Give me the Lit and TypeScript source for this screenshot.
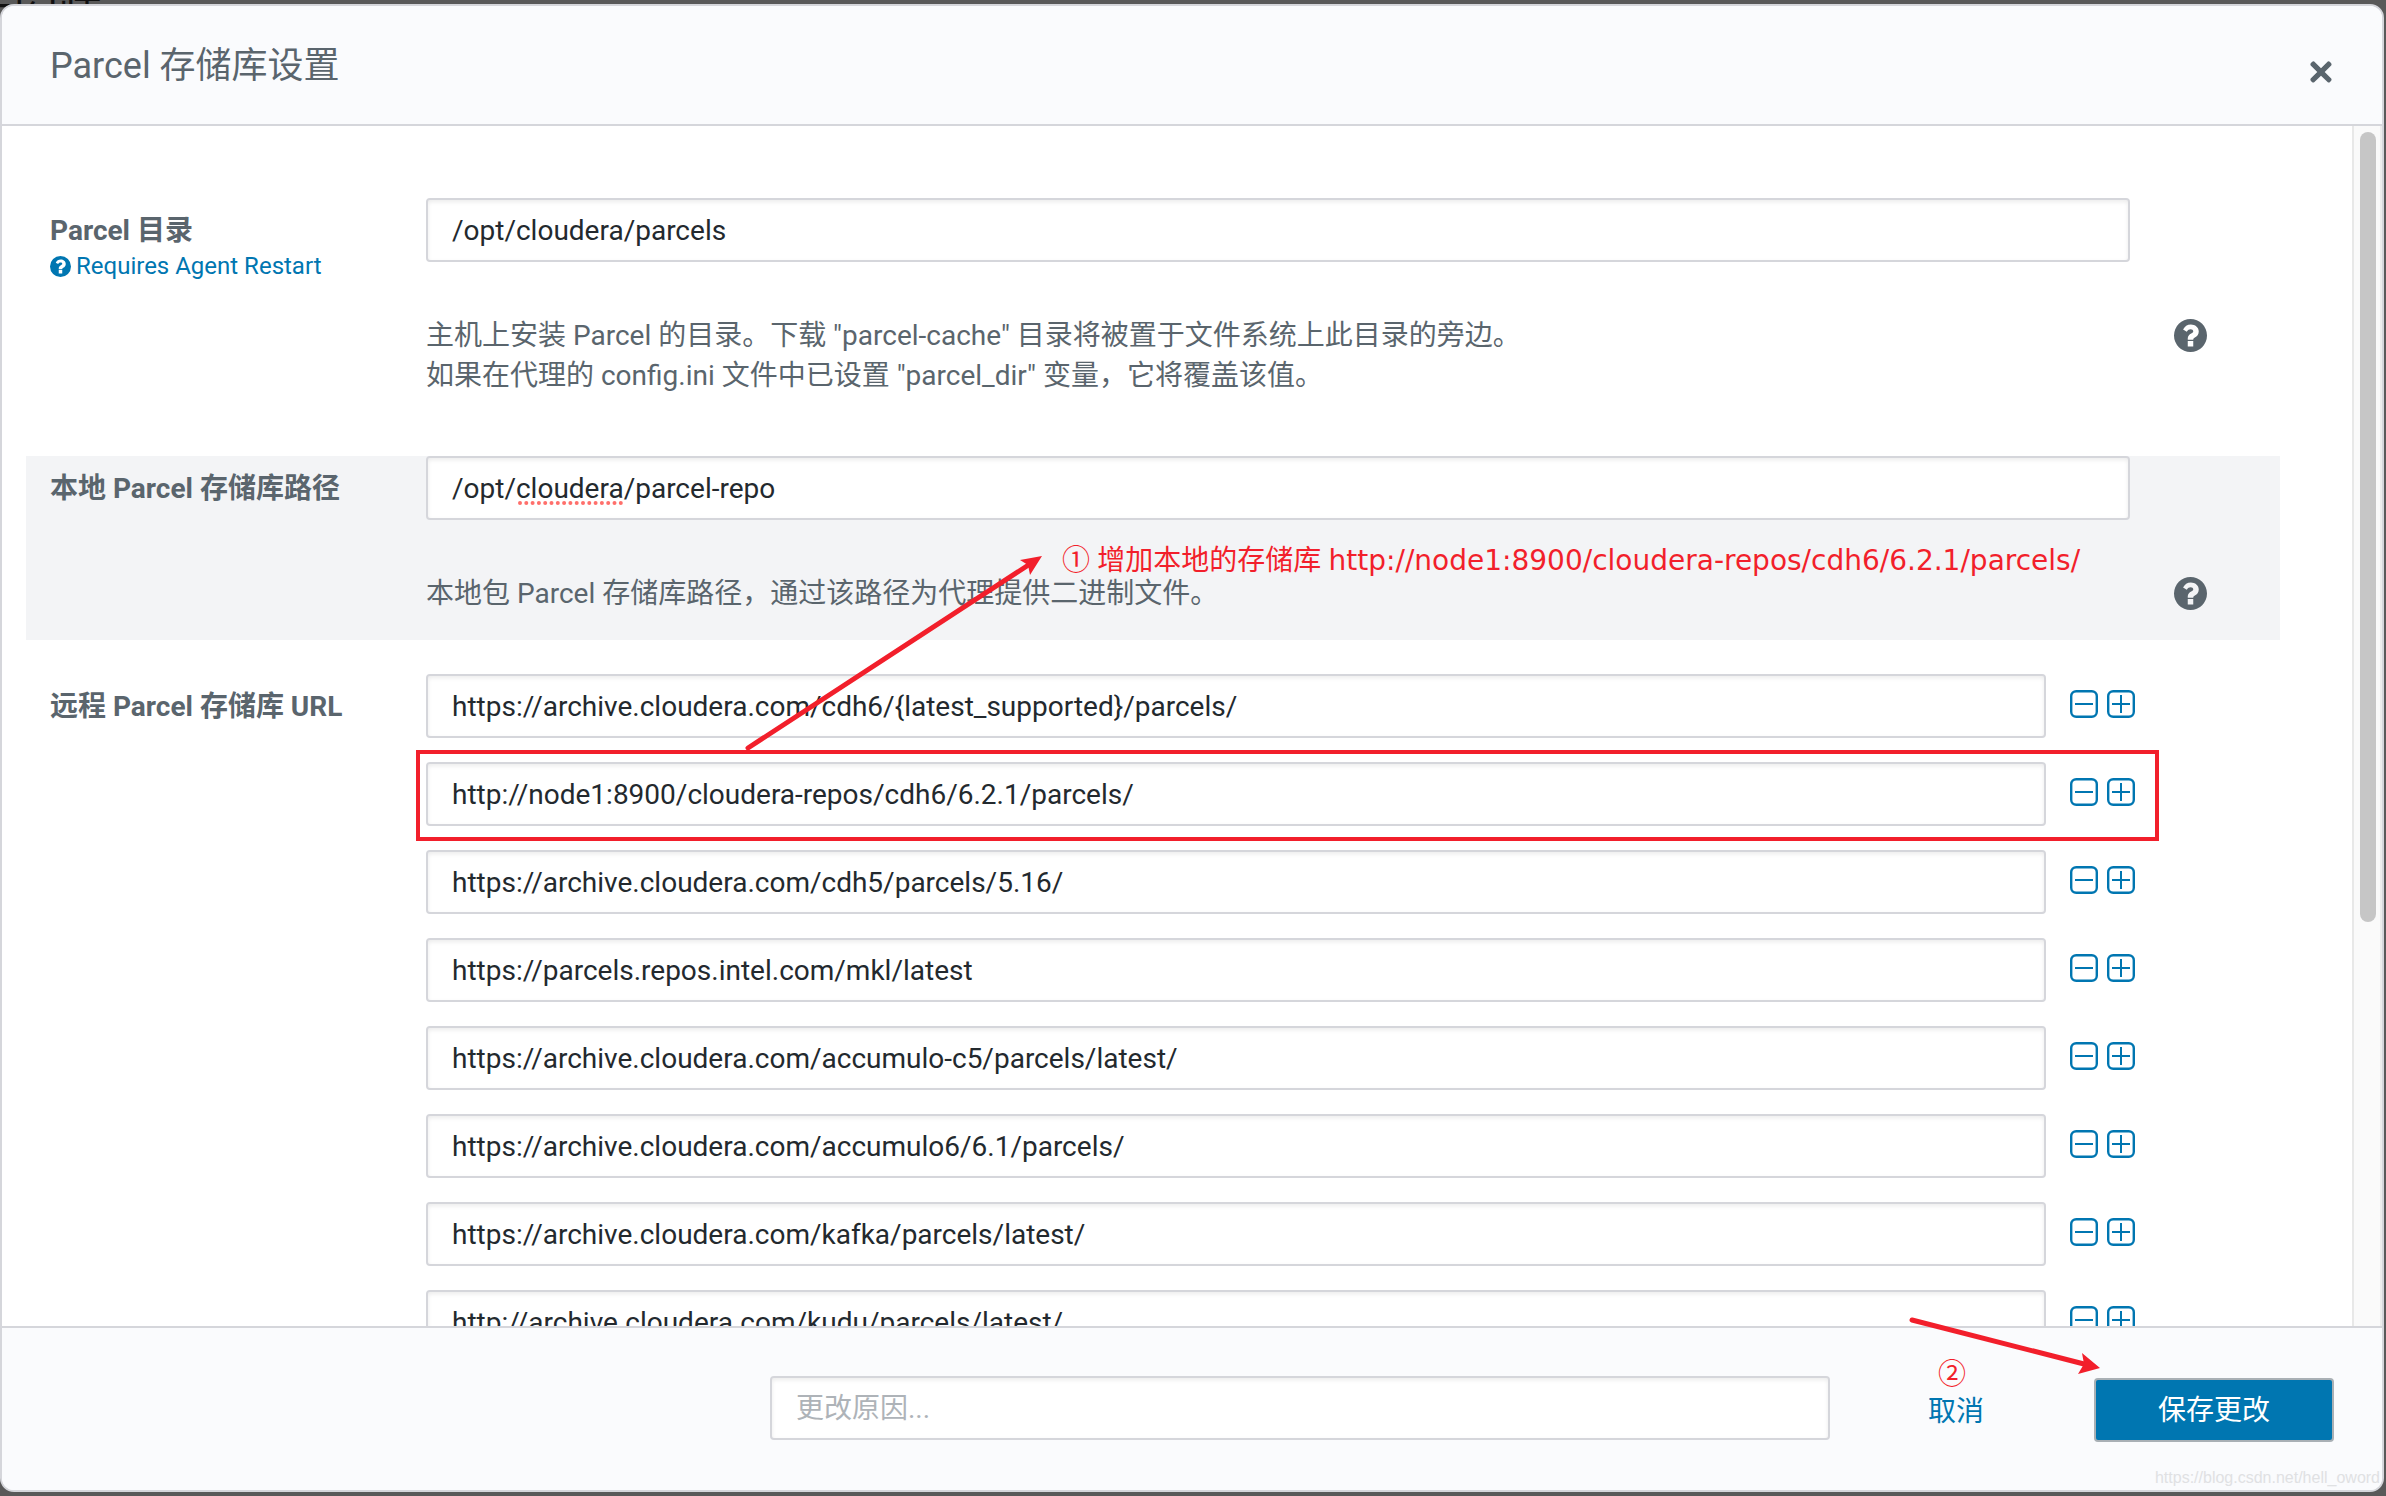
import { LitElement, html, css } from "lit";
import { customElement, property } from "lit/decorators.js";

const questionPath =
  "M12 0a12 12 0 1 0 0 24a12 12 0 0 0 0-24z M10 16h4v4h-4z M6.6 7.6C7.8 5.4 9.6 4 12.3 4C15.3 4 18 6 18 9c0 2.200-1.200 3.500-2.800 4.400c-.9.5-1.200.9-1.200 1.600h-4v-.8c0-1.900 1.200-3 2.500-3.700c1-.5 1.500-.9 1.500-1.600c0-.8-.8-1.400-1.900-1.400c-1.200 0-1.900.5-2.800 1.700z";

const repos = [
  "https://archive.cloudera.com/cdh6/{latest_supported}/parcels/",
  "http://node1:8900/cloudera-repos/cdh6/6.2.1/parcels/",
  "https://archive.cloudera.com/cdh5/parcels/5.16/",
  "https://parcels.repos.intel.com/mkl/latest",
  "https://archive.cloudera.com/accumulo-c5/parcels/latest/",
  "https://archive.cloudera.com/accumulo6/6.1/parcels/",
  "https://archive.cloudera.com/kafka/parcels/latest/",
  "http://archive.cloudera.com/kudu/parcels/latest/",
];

@customElement("help-icon")
export class HelpIcon extends LitElement {
  static styles = css`
    :host { display: block; }
    .icon { display: block; width: 100%; fill: currentColor; fill-rule: evenodd; }
  `;
  render() {
    return html`<svg class="icon" viewBox="0 0 24 24" aria-hidden="true"><path d=${questionPath}></path></svg>`;
  }
}

@customElement("repo-row")
export class RepoRow extends LitElement {
  @property() value = "";
  @property() name = "";
  static styles = css`
    :host { display: flex; align-items: flex-start; }
    .field {
      box-sizing: border-box; flex: 1; min-width: 0; height: 64px; padding: 0 24px;
      border: 2px solid #d5d6db; border-radius: 4px; background: #fff;
      box-shadow: inset 0 2px 4px rgba(0, 0, 0, 0.08);
      font: 28px Roboto, "Noto Sans CJK SC", sans-serif; color: #23292e; outline: none;
    }
    .tools { display: flex; flex: none; gap: 9px; padding: 16px 0 0 24px; width: 84px; box-sizing: border-box; }
    .tool { display: block; padding: 0; border: 0; background: none; cursor: pointer; }
    .glyph { display: block; width: 28px; height: 28px; fill: none; stroke: #0076b1; }
  `;
  render() {
    return html`
      <input class="field" type="text" aria-label=${this.name} .value=${this.value} spellcheck="false" />
      <div class="tools">
        <button class="tool" type="button" aria-label="-">
          <svg class="glyph" viewBox="0 0 28 28"><rect x="1.200" y="1.200" width="25.600" height="25.600" rx="5" stroke-width="2.400"></rect><path d="M5 14h18" stroke-width="2"></path></svg>
        </button>
        <button class="tool" type="button" aria-label="+">
          <svg class="glyph" viewBox="0 0 28 28"><rect x="1.200" y="1.200" width="25.600" height="25.600" rx="5" stroke-width="2.400"></rect><path d="M5 14h18M14 5v18" stroke-width="2"></path></svg>
        </button>
      </div>
    `;
  }
}

@customElement("app-root")
export class AppRoot extends LitElement {
  static styles = css`
    :host {
      display: block; position: relative; height: 100vh; box-sizing: border-box;
      padding: 4px 2px 4px 0; background: #595959; overflow: hidden;
      font: 28px/40px Roboto, "Noto Sans CJK SC", sans-serif; color: #5a656d;
    }
    .backdrop-text { position: absolute; left: -30px; top: -4px; font-size: 44px; line-height: 44px; color: #111; }
    .modal {
      position: relative; box-sizing: border-box; height: 100%; display: flex; flex-direction: column;
      border: 2px solid #d5d6db; border-radius: 14px; background: #fff; overflow: hidden;
    }
    .head {
      display: flex; align-items: flex-start; justify-content: space-between; flex: none;
      box-sizing: border-box; height: 120px; padding: 40px 50px 0 48px;
      background: #fafbfd; border-bottom: 2px solid #d5d6db;
    }
    .title { margin: 0; font-size: 36px; line-height: 40px; font-weight: 400; }
    .close { margin-top: 15px; padding: 0; border: 0; background: none; color: inherit; cursor: pointer; }
    .cross { display: block; width: 22px; height: 22px; fill: currentColor; }
    .body { flex: 1; min-height: 0; display: flex; }
    .scroll { flex: 1; min-width: 0; overflow: hidden; padding: 72px 72px 0 24px; }
    .form { display: flex; flex-direction: column; gap: 34px; }
    .row { display: grid; grid-template-columns: 400px minmax(0, 1fr) 150px; padding-bottom: 26px; }
    .shaded { background: #f3f4f6; }
    .side { padding: 13px 0 0 24px; }
    .label { display: block; font-weight: 700; }
    .restart { display: flex; align-items: center; gap: 5px; color: #0076b1; font-size: 24px; line-height: 30px; text-decoration: none; }
    .small-icon { width: 21px; }
    .field {
      box-sizing: border-box; width: 100%; height: 64px; padding: 0 24px; display: block;
      border: 2px solid #d5d6db; border-radius: 4px; background: #fff;
      box-shadow: inset 0 2px 4px rgba(0, 0, 0, 0.08);
      font: 28px Roboto, "Noto Sans CJK SC", sans-serif; color: #23292e; outline: none;
    }
    .field::placeholder { color: #aeb3b8; opacity: 1; }
    .main { position: relative; }
    .squiggle { position: absolute; left: 92px; top: 45px; width: 106px; height: 4px; }
    .desc { margin: 54px 0 0; }
    .help { display: block; padding: 0; border: 0; background: none; color: inherit; margin: 121px 0 0 44px; width: 33px; cursor: pointer; }
    .repos { display: flex; flex-direction: column; gap: 24px; }
    .track { flex: none; box-sizing: border-box; width: 30px; padding: 6px; background: #fafafa; border-left: 2px solid #e8e8e8; border-right: 2px solid #ededed; }
    .thumb { width: 16px; height: 66.5%; border-radius: 8px; background: #c6c6c6; }
    .foot {
      flex: none; box-sizing: border-box; height: 164px; padding: 48px 48px 0; display: flex;
      justify-content: flex-end; align-items: flex-start;
      background: #fafbfd; border-top: 2px solid #d5d6db;
    }
    .reason { flex: 0 1 1060px; min-width: 0; }
    .cancel { margin: 16px 110px 0 98px; color: #0076b1; text-decoration: none; white-space: nowrap; }
    .save {
      box-sizing: border-box; width: 240px; height: 64px; margin-top: 2px; border: 2px solid #a9b0b5; border-radius: 4px;
      padding: 2px 0 0; background: #0076b1; color: #fff; font: inherit; cursor: pointer;
    }
    .marks { position: absolute; left: 0; top: 0; width: 2386px; height: 1496px; pointer-events: none; }
    .box { fill: none; stroke: #f21f2b; stroke-width: 4; }
    .shaft { fill: none; stroke: #f21f2b; stroke-width: 5; stroke-linecap: round; }
    .tip { fill: #f21f2b; }
    .note { position: absolute; color: #f21f2b; white-space: nowrap; font-family: "Noto Sans", "Noto Sans CJK SC", sans-serif; }
    .url { font-family: "DejaVu Sans", sans-serif; }
    .first { left: 1062px; top: 539px; }
    .second { left: 1938px; top: 1353px; }
    .watermark { position: absolute; right: 6px; bottom: 6px; font: 16px/24px "Liberation Sans", sans-serif; color: #e0e1e3; }
  `;

  render() {
    return html`
      <div class="backdrop-text">主图师</div>
      <div class="modal" role="dialog" aria-labelledby="title">
        <header class="head">
          <h1 class="title" id="title">Parcel 存储库设置</h1>
          <button class="close" type="button" aria-label="×">
            <svg class="cross" viewBox="0 0 22 22"><path d="M4.200 0.500 11 7.200 17.800 0.500Q19 0 20 1L21.200 2.300Q22 3.500 21.200 4.500L14.700 11 21.200 17.500Q22 18.500 21.200 19.700L20 21Q19 22 17.800 21.200L11 14.700 4.200 21.200Q3 22 2 21L0.700 19.700Q0 18.500 0.700 17.500L7.300 11 0.700 4.500Q0 3.500 0.700 2.300L2 1Q3 0 4.200 0.500z"></path></svg>
          </button>
        </header>
        <div class="body">
          <div class="scroll">
            <form class="form">
              <div class="row">
                <div class="side">
                  <label class="label" for="dir">Parcel 目录</label>
                  <a class="restart" href="#"><help-icon class="small-icon"></help-icon>Requires Agent Restart</a>
                </div>
                <div class="main">
                  <input class="field" id="dir" type="text" value="/opt/cloudera/parcels" spellcheck="false" />
                  <p class="desc">主机上安装 Parcel 的目录。下载 "parcel-cache" 目录将被置于文件系统上此目录的旁边。<br />如果在代理的 config.ini 文件中已设置 "parcel_dir" 变量，它将覆盖该值。</p>
                </div>
                <div><button class="help" type="button" aria-label="?"><help-icon></help-icon></button></div>
              </div>
              <div class="row shaded">
                <div class="side"><label class="label" for="repo">本地 Parcel 存储库路径</label></div>
                <div class="main">
                  <input class="field" id="repo" type="text" value="/opt/cloudera/parcel-repo" spellcheck="false" />
                  <svg class="squiggle" viewBox="0 0 106 4" aria-hidden="true"><path d="M2 2H106" stroke="#ff6f6b" stroke-width="4" stroke-linecap="round" stroke-dasharray="0 6.300"></path></svg>
                  <p class="desc">本地包 Parcel 存储库路径，通过该路径为代理提供二进制文件。</p>
                </div>
                <div><button class="help" type="button" aria-label="?"><help-icon></help-icon></button></div>
              </div>
              <div class="row">
                <div class="side"><span class="label">远程 Parcel 存储库 URL</span></div>
                <div class="repos">
                  ${repos.map((url) => html`<repo-row .value=${url} name="远程 Parcel 存储库 URL"></repo-row>`)}
                </div>
              </div>
            </form>
          </div>
          <div class="track"><div class="thumb"></div></div>
        </div>
        <footer class="foot">
          <input class="field reason" type="text" placeholder="更改原因..." aria-label="更改原因" />
          <a class="cancel" href="#">取消</a>
          <button class="save" type="button">保存更改</button>
        </footer>
      </div>
      <svg class="marks" viewBox="0 0 2386 1496" aria-hidden="true">
        <rect class="box" x="418" y="752" width="1739" height="87"></rect>
        <path class="shaft" d="M748 748L1030 564M1912 1320L2084 1364"></path>
        <path class="tip" d="M1042 556L1030 575L1028 565L1020 560zM2100 1368L2078 1374L2084 1364L2082 1353z"></path>
      </svg>
      <div class="note first">① 增加本地的存储库 <span class="url">http://node1:8900/cloudera-repos/cdh6/6.2.1/parcels/</span></div>
      <div class="note second">②</div>
      <div class="watermark">https://blog.csdn.net/hell_oword</div>
    `;
  }
}
